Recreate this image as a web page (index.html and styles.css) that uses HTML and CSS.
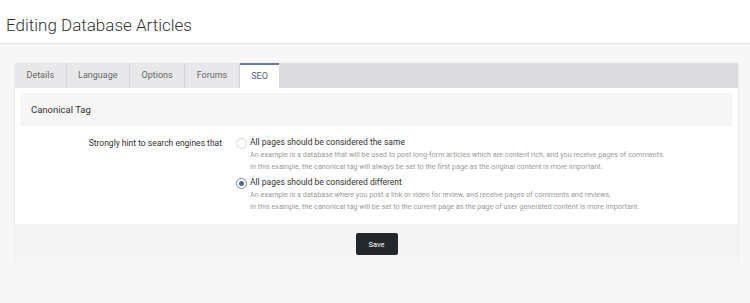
FILE: index.html
```html
<!DOCTYPE html>
<html lang="en">
<head>
    <meta charset="UTF-8">
    <meta name="viewport" content="width=device-width, initial-scale=1.0">
    <title>Editing Database Articles</title>
    <link rel="stylesheet" href="styles.css">
</head>
<body>
    <!-- Page Header -->
    <header class="page-header">
        <h1>Editing Database Articles</h1>
    </header>

    <main class="page-body">
        <div class="panel">
            <!-- Tabs -->
            <nav class="tabs">
                <a href="#" class="tab">Details</a>
                <a href="#" class="tab">Language</a>
                <a href="#" class="tab">Options</a>
                <a href="#" class="tab">Forums</a>
                <a href="#" class="tab active">SEO</a>
            </nav>

            <div class="panel-content">
                <h2 class="section-title">Canonical Tag</h2>

                <div class="form-row">
                    <label class="row-label">Strongly hint to search engines that</label>
                    <div class="options">
                        <label class="option">
                            <input type="radio" name="canonical" value="same">
                            <span class="radio"></span>
                            <span class="option-text">
                                <span class="option-title">All pages should be considered the same</span>
                                <span class="option-desc">An example is a database that will be used to post long-form articles which are content rich, and you receive pages of comments.<br>In this example, the canonical tag will always be set to the first page as the original content is more important.</span>
                            </span>
                        </label>
                        <label class="option">
                            <input type="radio" name="canonical" value="different" checked>
                            <span class="radio"></span>
                            <span class="option-text">
                                <span class="option-title">All pages should be considered different</span>
                                <span class="option-desc">An example is a database where you post a link or video for review, and receive pages of comments and reviews.<br>In this example, the canonical tag will be set to the current page as the page of user generated content is more important.</span>
                            </span>
                        </label>
                    </div>
                </div>
            </div>

            <!-- Save Bar -->
            <div class="panel-footer">
                <button type="submit" class="save-button">Save</button>
            </div>
        </div>
    </main>
</body>
</html>
```

FILE: styles.css
```css
/* Base */
body {
    margin: 0;
    font-family: Roboto, "Liberation Sans", Arial, sans-serif;
    background-color: #f7f7f7;
    color: #333;
}

/* Header */
.page-header {
    background: #fff;
    border-bottom: 1px solid #e4e4e4;
    height: 44px;
    box-sizing: border-box;
    padding: 12px 6px 0;
}

.page-header h1 {
    margin: 0;
    font-size: 17px;
    font-weight: 300;
    line-height: 26px;
    color: #333;
}

/* Main Area */
.page-body {
    padding: 19px 12px 0 15px;
}

.panel {
    background: #fff;
    box-shadow: 0 1px 2px rgba(0, 0, 0, 0.12);
}

/* Tabs */
.tabs {
    display: flex;
    height: 25px;
    background-color: #dcdcdf;
}

.tab {
    display: block;
    padding: 0 11.5px;
    line-height: 25px;
    font-size: 9px;
    color: #666;
    text-decoration: none;
    background-color: #e8e8ea;
    border-right: 1px solid #d6d6d9;
}

.tab.active {
    background-color: #fff;
    color: #4f6275;
    border-top: 2px solid #6c7c8b;
    line-height: 23px;
    border-right: none;
}

/* Content */
.panel-content {
    padding: 5px 6px 8px;
}

.section-title {
    margin: 0;
    height: 31px;
    line-height: 31px;
    padding: 0 9px;
    font-size: 9.5px;
    font-weight: 400;
    color: #333;
    background-color: #f6f6f6;
    border: 1px solid #f1f1f1;
}

.form-row {
    display: grid;
    grid-template-columns: 201px 1fr;
    column-gap: 14px;
    padding-top: 10px;
}

.row-label {
    text-align: right;
    font-size: 8.5px;
    line-height: 12px;
    padding-top: 1px;
}

.option {
    display: flex;
    align-items: flex-start;
    margin-bottom: 4px;
    cursor: pointer;
}

.option input {
    display: none;
}

.radio {
    flex: none;
    width: 9px;
    height: 9px;
    margin-top: 2px;
    margin-right: 3px;
    border: 1px solid #d6d6d6;
    border-radius: 50%;
    background: #fff;
    position: relative;
}

.option input:checked + .radio {
    border-color: #6f8aa3;
}

.option input:checked + .radio::after {
    content: "";
    position: absolute;
    left: 2px;
    top: 2px;
    width: 5px;
    height: 5px;
    border-radius: 50%;
    background: #4e6b86;
}

.option-text {
    display: flex;
    flex-direction: column;
}

.option-title {
    font-size: 8.5px;
    line-height: 13px;
    color: #333;
}

.option-desc {
    font-size: 7.25px;
    line-height: 11.5px;
    color: #9a9a9a;
}

/* Footer */
.panel-footer {
    display: flex;
    justify-content: center;
    background-color: #f5f5f5;
    padding: 9px 0 8px;
}

.save-button {
    background-color: #23282c;
    color: #fff;
    border: none;
    border-radius: 2px;
    width: 42px;
    height: 22px;
    font-family: inherit;
    font-size: 7.5px;
    cursor: pointer;
}
```
